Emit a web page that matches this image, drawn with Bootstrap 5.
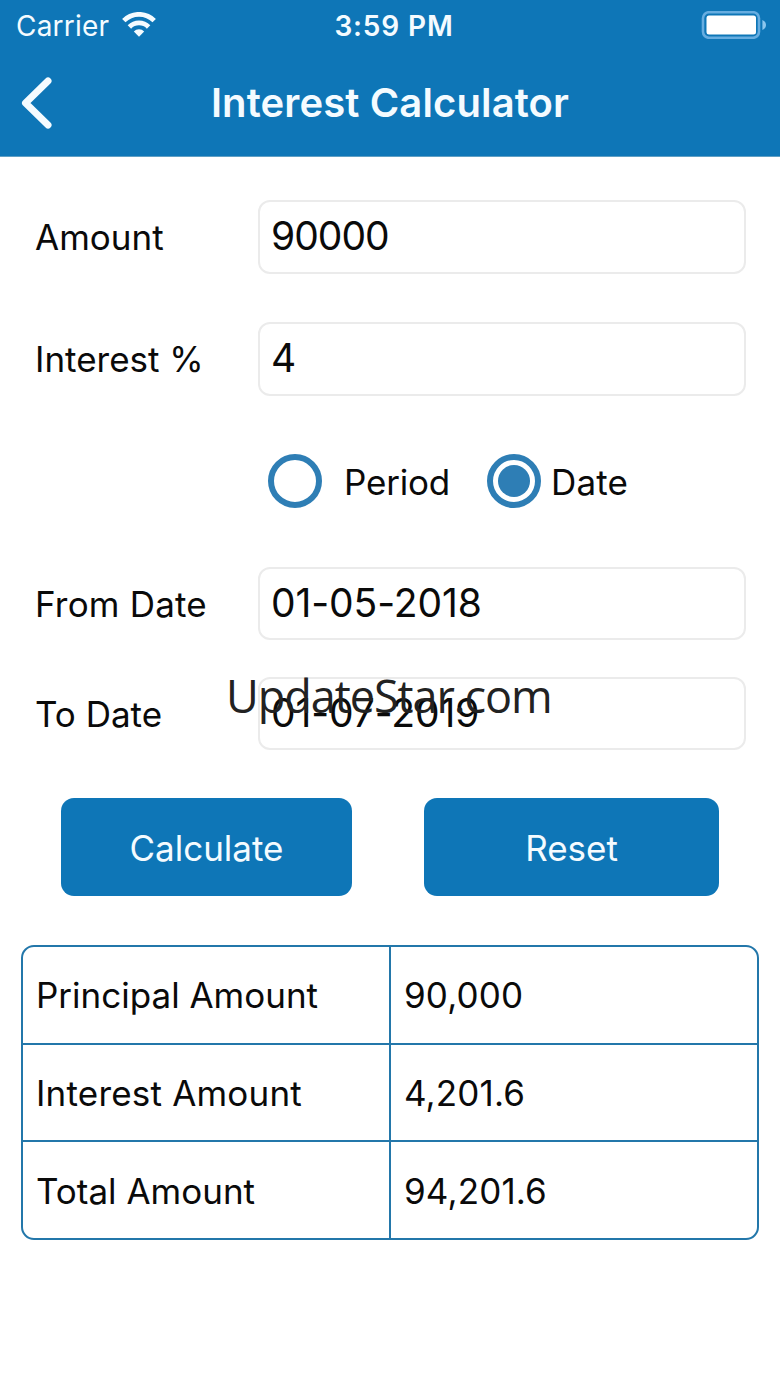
<!DOCTYPE html>
<html lang="en">
<head>
<meta charset="utf-8">
<meta name="viewport" content="width=device-width, initial-scale=1">
<title>Interest Calculator</title>
<link href="https://cdn.jsdelivr.net/npm/bootstrap@5.3.0/dist/css/bootstrap.min.css" rel="stylesheet">
<style>
:root{--brand:#0e76b7;--ring:#2e7eb5;--rule:#2377aa;--ice:#f4fbff}
body{font-family:Inter,"Liberation Sans",sans-serif;color:#0a0a0a;background:#fff;font-size:35px;line-height:42px;white-space:nowrap}
.app-head{background:var(--brand);height:157px;border-bottom:1px solid #5f9fc4;color:var(--ice)}
.status{height:51px;font-size:28px;grid-template-columns:1fr auto 1fr}
.carrier{letter-spacing:.2px}
.clock{letter-spacing:.85px;padding-left:8px}
.wifi{margin:0 0 2px 13px}
.battery{margin:0 14px 1px 0}
.title-bar{height:103px}
.app-title{font-size:40px;font-weight:600;line-height:48px;letter-spacing:.12px}
.field{height:73px;padding-left:35px;padding-right:34px}
.field-1{margin-top:43px}
.field-2{margin-top:49px}
.field-to{margin-top:37px}
.field label{width:223px;padding-top:1px}
.field .form-control{height:74px;border:2px solid #ebebeb;border-radius:12px;font-size:39px;line-height:68px;padding:0 0 0 11px;color:#0a0a0a}
.field .date-digits{height:73px;line-height:67px;letter-spacing:-.1px}
.field .digits{letter-spacing:-1px}
.wide{letter-spacing:.2px}
.choices{margin:59px 0 59px 268px;padding-bottom:0}
.choices .txt{padding-top:1px}
.period-txt{margin:0 37px 0 22px;letter-spacing:-.2px}
.date-txt{margin-left:10px;letter-spacing:.2px}
.ring{width:54px;height:54px;border:6px solid var(--ring)}
.dot{width:32px;height:32px;background:var(--ring)}
.actions{margin:48px 61px 0}
.act{height:98px;border-radius:13px;background:var(--brand);color:var(--ice);font-size:35px;line-height:42px;border:0;padding:2px 0 0}
.act-calc{width:291px}
.act-reset{width:295px}
.result{margin:49px 21px 0;width:738px;height:295px;border:2px solid var(--rule);border-radius:13px}
.result .line+.line{border-top:2px solid var(--rule)}
.result .line>div{padding:1px 0 0 13px}
.result .line>.key{width:366px}
.result .line>.val{border-left:2px solid var(--rule);letter-spacing:.15px}
.watermark{position:absolute;left:226px;top:663px;font:45px/66px "Open Sans",sans-serif;letter-spacing:-1.05px;color:#222}
</style>
</head>
<body>
<header class="app-head">
  <div class="status d-grid align-items-center">
    <div class="d-flex align-items-center ps-3"><span class="carrier">Carrier</span>
      <svg class="wifi" width="34" height="25" viewBox="0 0 34 25" fill="none" stroke="#f4fbff" stroke-width="4.8"><path d="M1.8 8.6a21.6 21.6 0 0 1 30.4 0"/><path d="M7.4 15a13.4 13.4 0 0 1 19.2 0"/><path d="M17 24.8l-5.2-5.4a7.4 7.4 0 0 1 10.4 0z" fill="#f4fbff" stroke="none"/></svg>
    </div>
    <span class="clock fw-semibold">3:59 PM</span>
    <svg class="battery ms-auto" width="66" height="28" viewBox="0 0 66 28"><rect x="3" y="1.2" width="56" height="25.6" rx="6" fill="none" stroke="#67ade0" stroke-width="2.6"/><rect x="6.5" y="4.6" width="49.5" height="18.8" rx="2.5" fill="#fff"/><path d="M62.4 9q3.6 1.6 3.6 5t-3.6 5z" fill="#8cc6ee"/></svg>
  </div>
  <div class="title-bar d-flex align-items-center justify-content-center position-relative">
    <svg class="position-absolute start-0" width="60" height="60" viewBox="0 0 60 60" fill="none" stroke="#f4fbff" stroke-width="7" stroke-linecap="round" stroke-linejoin="round"><path d="M48 8L25.5 30 48 52"/></svg>
    <span class="app-title">Interest Calculator</span>
  </div>
</header>
<main>
  <div class="field field-1 d-flex align-items-center"><label class="flex-shrink-0">Amount</label><output class="form-control digits">90000</output></div>
  <div class="field field-2 d-flex align-items-center"><label class="flex-shrink-0">Interest %</label><output class="form-control">4</output></div>
  <div class="choices d-flex align-items-center">
    <span class="ring rounded-circle"></span><span class="txt period-txt">Period</span>
    <span class="ring rounded-circle d-flex align-items-center justify-content-center"><span class="dot rounded-circle"></span></span><span class="txt date-txt">Date</span>
  </div>
  <div class="field d-flex align-items-center"><label class="flex-shrink-0 wide">From Date</label><output class="form-control date-digits">01-05-2018</output></div>
  <div class="field field-to d-flex align-items-center"><label class="flex-shrink-0">To Date</label><output class="form-control date-digits">01-07-2019</output></div>
  <div class="actions d-flex justify-content-between"><button class="btn act act-calc">Calculate</button><button class="btn act act-reset">Reset</button></div>
  <section class="result d-flex flex-column">
    <div class="line d-flex flex-fill"><div class="key d-flex align-items-center">Principal Amount</div><div class="val flex-fill d-flex align-items-center">90,000</div></div>
    <div class="line d-flex flex-fill"><div class="key wide d-flex align-items-center">Interest Amount</div><div class="val flex-fill d-flex align-items-center">4,201.6</div></div>
    <div class="line d-flex flex-fill"><div class="key d-flex align-items-center">Total Amount</div><div class="val flex-fill d-flex align-items-center">94,201.6</div></div>
  </section>
</main>
<div class="watermark">UpdateStar.com</div>
</body>
</html>
